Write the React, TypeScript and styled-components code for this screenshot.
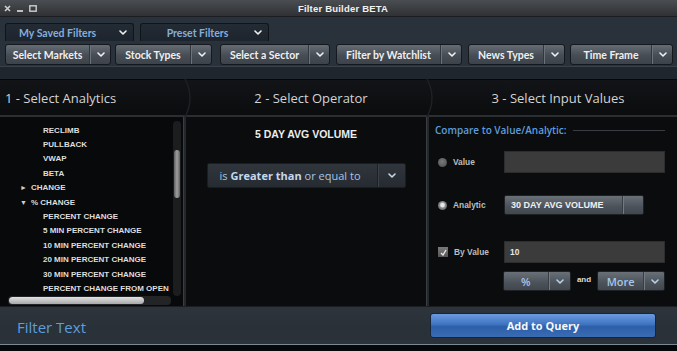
import React from "react";
import styled, { createGlobalStyle } from "styled-components";

const Global = createGlobalStyle`
  html, body { margin: 0; padding: 0; background: #0a0b0d; overflow: hidden; }
  * { box-sizing: border-box; }
`;

const UI = `Lato, "Open Sans", sans-serif`;
const CAPS = `"Liberation Sans", Arial, sans-serif`;

const Window = styled.div`
  width: 677px;
  height: 351px;
  display: flex;
  flex-direction: column;
  background: #0a0b0d;
  font-family: ${UI};
  overflow: hidden;
`;

const TitleBar = styled.div`
  height: 17px;
  flex: none;
  display: flex;
  align-items: center;
  background: linear-gradient(#4a4d51, #2f3134);
  border-bottom: 1px solid #1b1d20;
  padding-left: 4px;
`;

const WinIcons = styled.div`
  display: flex;
  align-items: center;
  gap: 6px;
`;

const Title = styled.div`
  flex: 1;
  text-align: center;
  font-family: ${CAPS};
  font-weight: bold;
  font-size: 9.5px;
  color: #f2f2f2;
  margin-right: 28px;
  letter-spacing: 0.2px;
`;

const TopArea = styled.div`
  height: 62px;
  flex: none;
  display: flex;
  flex-direction: column;
  background: #29313a;
`;

const TabRow = styled.div`
  display: flex;
  gap: 6px;
  padding: 6px 0 0 5px;
  height: 24px;
`;

const Tab = styled.div<{ $center?: boolean }>`
  width: 129px;
  height: 18px;
  display: flex;
  align-items: center;
  background: linear-gradient(#232b35, #1d242d);
  border: 1px solid #0f1419;
  border-bottom: none;
  border-radius: 3px 3px 0 0;
  color: #86addb;
  font-size: 10.5px;
  font-weight: 700;
  padding: 0 6px 0 ${(p) => (p.$center ? "0" : "13px")};
  span {
    flex: 1;
    text-align: ${(p) => (p.$center ? "center" : "left")};
  }
`;

const DropRow = styled.div`
  display: flex;
  padding: 3px 0 0 5px;
  height: 25px;
`;

const DropButton = styled.div<{ $w: number; $ml: number }>`
  width: ${(p) => p.$w}px;
  margin-left: ${(p) => p.$ml}px;
  height: 21px;
  display: flex;
  border: 1px solid #15191d;
  border-radius: 3px;
  background: linear-gradient(#656c74, #474d54 55%, #3d4349);
  color: #f0f0f0;
  font-size: 10.5px;
  font-weight: 700;
  overflow: hidden;
`;

const DropLabel = styled.div`
  flex: 1;
  display: flex;
  align-items: center;
  justify-content: center;
  white-space: nowrap;
  border-right: 1px solid #32373d;
`;

const DropArrow = styled.div`
  width: 20px;
  display: flex;
  align-items: center;
  justify-content: center;
  border-left: 1px solid #6b7279;
`;

const TopStrip = styled.div`
  flex: 1;
  border-top: 1px solid #39424c;
  background: #20262d;
`;

const HeaderRow = styled.div`
  height: 38px;
  flex: none;
  display: flex;
  align-items: center;
  background: linear-gradient(#121417, #0b0c0e);
  border-top: 1px solid #060708;
  border-bottom: 2px solid #2b2f34;
  color: #d4d4d4;
  font-family: "Open Sans", sans-serif;
  font-size: 13px;
`;

const HeaderCell = styled.div<{ $w: number; $left?: boolean }>`
  width: ${(p) => p.$w}px;
  flex: none;
  text-align: ${(p) => (p.$left ? "left" : "center")};
  padding-left: ${(p) => (p.$left ? "5px" : "0")};
  white-space: nowrap;
`;

const Chevron = styled.svg`
  flex: none;
  display: block;
`;

const Content = styled.div`
  height: 189px;
  flex: none;
  display: flex;
  background: #08090a;
`;

const LeftPanel = styled.div`
  width: 183px;
  flex: none;
  display: grid;
  grid-template-columns: 1fr 8px;
  grid-template-rows: 1fr 9px;
  padding: 6px 2px 1px 8px;
  column-gap: 2px;
`;

const List = styled.div`
  display: flex;
  flex-direction: column;
  overflow: hidden;
`;

const Item = styled.div<{ $level: number }>`
  height: 14.4px;
  flex: none;
  display: flex;
  align-items: center;
  padding-left: ${(p) => (p.$level === 0 ? 12 : 35)}px;
  font-family: ${CAPS};
  font-weight: bold;
  font-size: 8px;
  color: #dedede;
  white-space: nowrap;
`;

const Caret = styled.span`
  width: 11px;
  font-size: 7px;
  color: #cfcfcf;
`;

const VTrack = styled.div`
  background: #1c1d1f;
  border-radius: 4px;
  padding: 29px 1px 0;
  margin-top: -2px;
`;

const VThumb = styled.div`
  height: 48px;
  border-radius: 3px;
  background: linear-gradient(90deg, #5e5e5e, #a0a0a0 50%, #5e5e5e);
`;

const HTrack = styled.div`
  background: #232426;
  border-radius: 4px;
  padding: 1px 27px 1px 1px;
  display: flex;
`;

const HThumb = styled.div`
  flex: 1;
  border-radius: 4px;
  background: linear-gradient(#e2e2e2, #a8a8a8);
`;

const Divider = styled.div`
  width: 3px;
  flex: none;
  background: #24272b;
  border-left: 1px solid #3a3e43;
`;

const MiddlePanel = styled.div`
  width: 240px;
  flex: none;
  display: flex;
  flex-direction: column;
  align-items: center;
  background: #0b0c0e;
  padding-top: 11px;
`;

const MidTitle = styled.div`
  font-family: ${CAPS};
  font-weight: bold;
  font-size: 10.5px;
  color: #ececec;
`;

const OperatorBox = styled.div`
  margin-top: 23px;
  width: 199px;
  height: 25px;
  display: flex;
  background: linear-gradient(#30363d, #262b31);
  border: 1px solid #1a1d21;
  border-radius: 2px;
  color: #a9c4e4;
  font-family: "Open Sans", sans-serif;
  font-size: 11px;
  b {
    font-weight: 700;
    color: #c4d8ef;
  }
`;

const OpLabel = styled.div`
  flex: 1;
  display: flex;
  align-items: center;
  justify-content: center;
  gap: 3px;
  white-space: nowrap;
  border-right: 1px solid #1c2025;
  padding-right: 4px;
`;

const OpArrow = styled.div`
  width: 27px;
  display: flex;
  align-items: center;
  justify-content: center;
  border-left: 1px solid #3b4148;
`;

const RightPanel = styled.div`
  flex: 1;
  min-width: 0;
  display: flex;
  flex-direction: column;
  padding: 6px 12px 0 6px;
  background: #0b0c0e;
`;

const SectionHead = styled.div`
  display: flex;
  align-items: center;
  gap: 6px;
  color: #5e9ddc;
  font-family: "Open Sans", sans-serif;
  font-size: 10px;
  font-weight: 600;
  white-space: nowrap;
  &::after {
    content: "";
    flex: 1;
    height: 1px;
    background: #3a3d42;
    margin-top: 1px;
  }
`;

const FormRow = styled.div<{ $mt: number }>`
  display: grid;
  grid-template-columns: 66px 1fr;
  align-items: center;
  margin-top: ${(p) => p.$mt}px;
  padding-left: 3px;
`;

const Label = styled.div`
  display: flex;
  align-items: center;
  gap: 6px;
  font-family: ${CAPS};
  font-weight: bold;
  font-size: 8.4px;
  color: #bdbdbd;
`;

const Radio = styled.span<{ $on?: boolean }>`
  width: 9px;
  height: 9px;
  border-radius: 50%;
  background: ${(p) =>
    p.$on
      ? "radial-gradient(circle at 50% 45%, #e8e8e8 0 25%, #8a8a8a 45%, #4c4c4c 100%)"
      : "radial-gradient(circle at 45% 40%, #7a7a7a, #4a4a4a)"};
`;

const Check = styled.span`
  width: 10px;
  height: 10px;
  background: linear-gradient(#7a7a7a, #555);
  display: flex;
  align-items: center;
  justify-content: center;
`;

const Field = styled.div`
  height: 22px;
  background: #3b3b3c;
  border: 1px solid #2d2d2e;
  display: flex;
  align-items: center;
  padding-left: 5px;
  font-family: ${CAPS};
  font-weight: bold;
  font-size: 8.4px;
  color: #e6e6e6;
`;

const GreySelect = styled.div<{ $w: number }>`
  width: ${(p) => p.$w}px;
  height: 20px;
  display: flex;
  border: 1px solid #1d2024;
  border-radius: 2px;
  background: linear-gradient(#6a7078, #4c5259 60%, #42474e);
  overflow: hidden;
`;

const SelText = styled.div<{ $caps?: boolean; $blue?: boolean }>`
  flex: 1;
  display: flex;
  align-items: center;
  padding-left: ${(p) => (p.$caps ? "6px" : "0")};
  justify-content: ${(p) => (p.$caps ? "flex-start" : "center")};
  font-family: ${(p) => (p.$caps ? CAPS : `"Open Sans", sans-serif`)};
  font-weight: ${(p) => (p.$caps ? 700 : 600)};
  font-size: ${(p) => (p.$caps ? "9px" : "11px")};
  color: ${(p) => (p.$blue ? "#a6c6ec" : "#f0f0f0")};
  border-right: 1px solid #393e44;
  white-space: nowrap;
`;

const SelArrow = styled.div<{ $w: number }>`
  width: ${(p) => p.$w}px;
  display: flex;
  align-items: center;
  justify-content: center;
  border-left: 1px solid #737a81;
`;

const UnitRow = styled.div`
  display: flex;
  align-items: center;
  margin-top: 8px;
  padding-left: 68px;
`;

const And = styled.span`
  width: 27px;
  text-align: center;
  font-family: ${CAPS};
  font-weight: bold;
  font-size: 8px;
  color: #dcdcdc;
  margin-top: -4px;
`;

const Footer = styled.div`
  height: 38px;
  flex: none;
  display: flex;
  align-items: center;
  justify-content: space-between;
  padding: 0 21px 0 17px;
  background: linear-gradient(#2d343c, #2a3139 45%, #283038 46%, #2b323a);
  border-top: 1px solid #1a1e23;
`;

const FilterText = styled.div`
  color: #5e9ddc;
  font-family: "Open Sans", sans-serif;
  font-size: 15px;
  margin-top: 3px;
`;

const QueryButton = styled.div`
  width: 226px;
  height: 25px;
  display: flex;
  align-items: center;
  justify-content: center;
  border-radius: 3px;
  border: 1px solid #17253a;
  background: linear-gradient(#6a9be0, #3f74c0 45%, #2d5ea8 55%, #3a6bb5);
  color: #f6f8fb;
  font-family: "Open Sans", sans-serif;
  font-size: 11px;
  font-weight: 700;
`;

const BottomStrip = styled.div`
  flex: 1;
  background: #060708;
  border-top: 1px solid #7b8896;
`;

const Down = ({ c = "#f0f0f0" }: { c?: string }) => (
  <svg width={8} height={5} viewBox="0 0 8 5">
    <polyline points="1,1 4,4 7,1" fill="none" stroke={c} strokeWidth="1.6" strokeLinecap="round" strokeLinejoin="round" />
  </svg>
);

const Sep = () => (
  <Chevron width="14" height="38" viewBox="0 0 14 38">
    <path d="M2 0 Q 12 19 2 38" fill="none" stroke="#1d2024" strokeWidth="1.5" />
  </Chevron>
);

const drops = [
  { t: "Select Markets", w: 106, ml: 0 },
  { t: "Stock Types", w: 97, ml: 4 },
  { t: "Select a Sector", w: 110, ml: 8 },
  { t: "Filter by Watchlist", w: 126, ml: 6 },
  { t: "News Types", w: 97, ml: 6 },
  { t: "Time Frame", w: 103, ml: 5 },
];

const items: { t: string; level: number; caret?: string }[] = [
  { t: "RECLIMB", level: 1 },
  { t: "PULLBACK", level: 1 },
  { t: "VWAP", level: 1 },
  { t: "BETA", level: 1 },
  { t: "CHANGE", level: 0, caret: "►" },
  { t: "% CHANGE", level: 0, caret: "▼" },
  { t: "PERCENT CHANGE", level: 1 },
  { t: "5 MIN PERCENT CHANGE", level: 1 },
  { t: "10 MIN PERCENT CHANGE", level: 1 },
  { t: "20 MIN PERCENT CHANGE", level: 1 },
  { t: "30 MIN PERCENT CHANGE", level: 1 },
  { t: "PERCENT CHANGE FROM OPEN", level: 1 },
];

export default function App() {
  return (
    <Window>
      <Global />
      <TitleBar>
        <WinIcons>
          <svg width="7" height="7" viewBox="0 0 7 7">
            <path d="M1 1 L6 6 M6 1 L1 6" stroke="#cfcfcf" strokeWidth="1.6" />
          </svg>
          <svg width="6" height="7" viewBox="0 0 6 7">
            <path d="M0 6 H6" stroke="#cfcfcf" strokeWidth="1.8" />
          </svg>
          <svg width="8" height="7" viewBox="0 0 8 7">
            <rect x="0.8" y="0.8" width="6.4" height="5.4" fill="none" stroke="#cfcfcf" strokeWidth="1.4" />
          </svg>
        </WinIcons>
        <Title>Filter Builder BETA</Title>
      </TitleBar>

      <TopArea>
        <TabRow>
          <Tab>
            <span>My Saved Filters</span>
            <Down />
          </Tab>
          <Tab $center>
            <span>Preset Filters</span>
            <Down />
          </Tab>
        </TabRow>
        <DropRow>
          {drops.map((d) => (
            <DropButton key={d.t} $w={d.w} $ml={d.ml}>
              <DropLabel>{d.t}</DropLabel>
              <DropArrow>
                <Down />
              </DropArrow>
            </DropButton>
          ))}
        </DropRow>
        <TopStrip />
      </TopArea>

      <HeaderRow>
        <HeaderCell $w={183} $left>
          1 - Select Analytics
        </HeaderCell>
        <Sep />
        <HeaderCell $w={228}>2 - Select Operator</HeaderCell>
        <Sep />
        <HeaderCell $w={238}>3 - Select Input Values</HeaderCell>
      </HeaderRow>

      <Content>
        <LeftPanel>
          <List>
            {items.map((it) => (
              <Item key={it.t} $level={it.level}>
                {it.caret && <Caret>{it.caret}</Caret>}
                {it.t}
              </Item>
            ))}
          </List>
          <VTrack>
            <VThumb />
          </VTrack>
          <HTrack>
            <HThumb />
          </HTrack>
        </LeftPanel>
        <Divider />
        <MiddlePanel>
          <MidTitle>5 DAY AVG VOLUME</MidTitle>
          <OperatorBox>
            <OpLabel>
              is <b>Greater than</b> or equal to
            </OpLabel>
            <OpArrow>
              <Down c="#c8d6e6" />
            </OpArrow>
          </OperatorBox>
        </MiddlePanel>
        <Divider />
        <RightPanel>
          <SectionHead>Compare to Value/Analytic:</SectionHead>
          <FormRow $mt={14}>
            <Label>
              <Radio />
              Value
            </Label>
            <Field />
          </FormRow>
          <FormRow $mt={22}>
            <Label>
              <Radio $on />
              Analytic
            </Label>
            <GreySelect $w={140}>
              <SelText $caps>30 DAY AVG VOLUME</SelText>
              <SelArrow $w={20} />
            </GreySelect>
          </FormRow>
          <FormRow $mt={26}>
            <Label>
              <Check>
                <svg width="7" height="7" viewBox="0 0 7 7">
                  <polyline points="1,4 3,6 6,1" fill="none" stroke="#e8e8e8" strokeWidth="1.4" />
                </svg>
              </Check>
              By Value
            </Label>
            <Field>10</Field>
          </FormRow>
          <UnitRow>
            <GreySelect $w={69}>
              <SelText $blue>%</SelText>
              <SelArrow $w={21}>
                <Down c="#b9d0ea" />
              </SelArrow>
            </GreySelect>
            <And>and</And>
            <GreySelect $w={69}>
              <SelText $blue>More</SelText>
              <SelArrow $w={20}>
                <Down c="#b9d0ea" />
              </SelArrow>
            </GreySelect>
          </UnitRow>
        </RightPanel>
      </Content>

      <Footer>
        <FilterText>Filter Text</FilterText>
        <QueryButton>Add to Query</QueryButton>
      </Footer>
      <BottomStrip />
    </Window>
  );
}
